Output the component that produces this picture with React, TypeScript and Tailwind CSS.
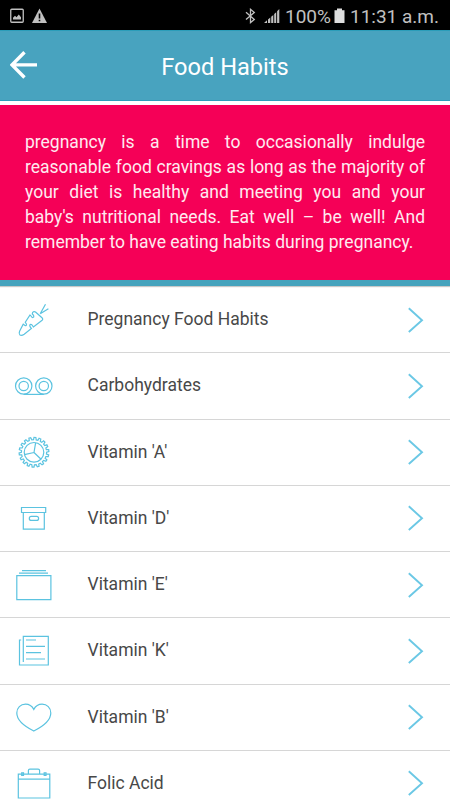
import { FC, ReactNode } from "react";

const teeth = Array.from({ length: 18 }, (_, i) => {
  const point = (radius: number, step: number) => {
    const angle = ((i + step) / 18) * Math.PI * 2;
    return `${20 + radius * Math.cos(angle)},${20.3 + radius * Math.sin(angle)}`;
  };
  return [point(12.6, 0), point(12.6, 0.4), point(14.9, 0.5), point(14.9, 0.86)].join(" ");
}).join(" ");

const items: { label: string; icon: ReactNode }[] = [
  {
    label: "Pregnancy Food Habits",
    icon: (
      <>
        <path d="M5.8 34.8C4.9 33.9 5 32.6 5.6 31.2L9.2 24.2c1 .2 1.4 1.9 2.7 1.4 1.3-.6.4-2-.6-3.3L16 15c1.2.4 1.4 2.9 3 2.5 1.6-.5.6-2.7-.7-3.6.1-1.9 1.7-3 3.2-1.9L28 17.8c1 .9.9 2-.2 2.8L19.4 27c-1-.9-1-2.7-2.6-2.6-1.7.2-1.1 2.3.6 4L10.2 34.2C8.5 35.4 6.9 35.9 5.8 34.8Z" />
        <path d="M26.2 13.8 31.5 4.2M26.2 13.8l8.2-5" />
      </>
    ),
  },
  {
    label: "Carbohydrates",
    icon: (
      <>
        <circle cx="9.7" cy="20" r="8.2" />
        <circle cx="9.7" cy="20" r="4.7" />
        <circle cx="29.8" cy="20" r="8.2" />
        <circle cx="29.8" cy="20" r="4.7" />
        <path d="M9.7 28.4h20.1" />
      </>
    ),
  },
  {
    label: "Vitamin 'A'",
    icon: (
      <>
        <polygon points={teeth} />
        <circle cx="20" cy="20.3" r="9.8" />
        <path d="m20 20.5 1.6-9.6M20 20.5l-9.6 2.2M20 20.5l6.8 6.5" />
      </>
    ),
  },
  {
    label: "Vitamin 'D'",
    icon: (
      <>
        <path d="M7.5 9.5h24.2v5H7.5zM9.3 14.5v16.7h21V14.5" />
        <rect x="15.3" y="18.4" width="9.3" height="4" rx="2" />
      </>
    ),
  },
  {
    label: "Vitamin 'E'",
    icon: <path d="M2.8 10.7h34.1v24H2.8zM5 8.2h29M8 5.6h24" />,
  },
  {
    label: "Vitamin 'K'",
    icon: (
      <path d="M9.3 31V5.4h25v28.6H5.5V9h1.7M12 9h10M12 15.3h19M12 21.7h15M12 28h19" />
    ),
  },
  {
    label: "Vitamin 'B'",
    icon: (
      <path d="M19.8 12.4C18 9 14.8 7.2 11.5 7.2 6.6 7.2 2.8 10.8 2.8 16c0 8.8 9.4 14.2 17 18 7.6-3.8 17-9.2 17-18 0-5.2-3.8-8.8-8.7-8.8-3.3 0-6.5 1.8-8.3 5.2Z" />
    ),
  },
  {
    label: "Folic Acid",
    icon: (
      <>
        <path d="M4.3 11.2h31.5V35H4.3zM4.3 16.2h31.5M14.4 11.2V7.6q0-1.5 1.5-1.5h8.2q1.5 0 1.5 1.5v3.6" />
        <rect x="7.7" y="9.8" width="1.8" height="2.6" />
        <rect x="30.2" y="9.8" width="1.8" height="2.6" />
      </>
    ),
  },
];

const StatusBar: FC = () => {
  return (
    <div className="flex h-[30px] shrink-0 items-center bg-black pt-0.5 pr-[11px] pl-2.5 text-[#c0c0c0]">
      <svg width="14" height="16" viewBox="0 0 14 16" fill="none">
        <rect x=".75" y="1.25" width="12.5" height="13" rx="1" stroke="currentColor" strokeWidth="1.3" />
        <path d="M3 11.5V9.7L5 7.8l1.5 1.4L8.8 6.5l2.2 2.8v2.2z" fill="currentColor" />
      </svg>
      <svg className="ml-2" width="15" height="16" viewBox="0 0 15 16">
        <path d="M7.5.5 15 15H0z" fill="currentColor" />
        <path d="M6.7 5.5h1.6v5H6.7zM6.7 11.7h1.6v1.6H6.7z" fill="#000" />
      </svg>
      <div className="ml-auto flex items-center">
        <svg width="11" height="16" viewBox="0 0 11 16" fill="none" stroke="currentColor" strokeWidth="1.3">
          <path d="M1 4.3 9.3 11.5 5.5 14.6V1.3L9.3 4.4 1 11.6" />
        </svg>
        <svg className="ml-2" width="16" height="16" viewBox="0 0 16 16" fill="currentColor">
          <path d="M0 15 3 12.3V15zM4 11.5 6.3 9.5V15H4zM7.2 8.8l2.1-1.9V15H7.2zM10.2 6.1l2-1.9V15h-2zM13.1 3.3l2.2-2.3v14h-2.2z" />
        </svg>
        <span className="ml-[5px] text-[19px] leading-none">100%</span>
        <svg className="ml-[3px]" width="11" height="16" viewBox="0 0 11 16" fill="#dedede">
          <path d="M3 .5h5v1.7h2.5V15H.5V2.2H3z" />
        </svg>
        <span className="ml-[5px] text-[19px] leading-none">11:31 a.m.</span>
      </div>
    </div>
  );
};

const Header: FC = () => {
  return (
    <header className="flex h-[71px] shrink-0 items-center border-y border-[#2b9db9] bg-[#48a3bf] text-white">
      <button className="mb-0.5 ml-2.5 w-7" aria-label="Back">
        <svg width="28" height="28" viewBox="0 0 28 28" fill="none" stroke="currentColor" strokeWidth="3.4">
          <path d="M14.5 1.3 2 13.9l12.5 12.6M2 13.9h25" />
        </svg>
      </button>
      <h1 className="mt-1 mr-[38px] flex-1 text-center text-[23.6px]">Food Habits</h1>
    </header>
  );
};

const Row: FC<{ label: string; icon: ReactNode }> = ({ label, icon }) => {
  return (
    <li className="flex h-[66.25px] shrink-0 items-center border-b-[1.5px] border-[#d6d6d6] pr-[25px] pl-3.5">
      <svg width="40" height="40" viewBox="0 0 40 40" fill="none" stroke="#5bc3e0" strokeWidth="1.2">
        {icon}
      </svg>
      <span className="mb-px ml-[33.5px] text-[17.5px] text-[#484848]">{label}</span>
      <svg className="ml-auto" width="18" height="26" viewBox="0 0 18 26" fill="none" stroke="#6bc8e5" strokeWidth="1.9">
        <path d="M1.8 1.3 15 13.2 1.8 25" />
      </svg>
    </li>
  );
};

export default function App() {
  return (
    <div className="flex h-[800px] w-[450px] flex-col overflow-hidden bg-white font-[Roboto,sans-serif]">
      <StatusBar />
      <Header />
      <p className="mt-1 h-[175px] shrink-0 bg-[#f50057] px-[25px] pt-[25px] text-justify text-[17.5px] leading-[25px] text-[#ffeaf0]">
        pregnancy is a time to occasionally indulge reasonable food cravings as long as the
        majority of your diet is healthy and meeting you and your baby's nutritional needs. Eat
        well – be well! And remember to have eating habits during pregnancy.
      </p>
      <div className="h-1.5 shrink-0 bg-[#45a3bd] shadow-[0_1px_1px_#c8c8c8]" />
      <ul className="flex flex-col pt-[1.1px]">
        {items.map((item) => (
          <Row key={item.label} {...item} />
        ))}
      </ul>
    </div>
  );
}
